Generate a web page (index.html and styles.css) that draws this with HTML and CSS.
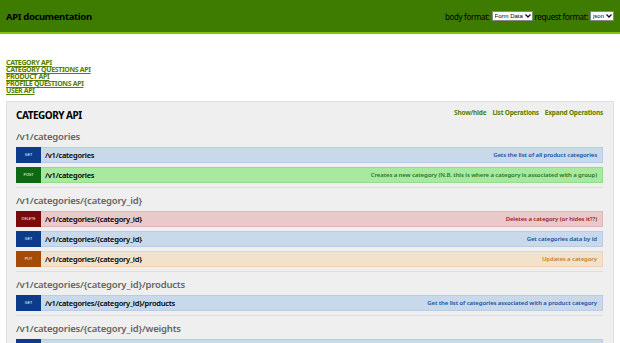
FILE: index.html
```html
<!DOCTYPE html>
<html lang="en">
  <head>
    <meta charset="UTF-8" />
    <meta name="viewport" content="width=device-width, initial-scale=1.0" />
    <title>API documentation</title>
    <link rel="stylesheet" href="styles.css">
  </head>
  <body>
    <header class="topbar">
      <h1 class="title">API documentation</h1>
      <form class="formats">
        <label>body format:</label>
        <span class="pick">
          <select><option>Form Data</option></select>
          <svg width="6" height="4" viewBox="0 0 6 4"><path d="M0.5 0.5 L3 3 L5.5 0.5" fill="none" stroke="#111" stroke-width="1.3"/></svg>
        </span>
        <label>request format:</label>
        <span class="pick">
          <select><option>json</option></select>
          <svg width="6" height="4" viewBox="0 0 6 4"><path d="M0.5 0.5 L3 3 L5.5 0.5" fill="none" stroke="#111" stroke-width="1.3"/></svg>
        </span>
      </form>
    </header>

    <ul class="api-links">
      <li><a href="#">CATEGORY API</a></li>
      <li><a href="#">CATEGORY QUESTIONS API</a></li>
      <li><a href="#">PRODUCT API</a></li>
      <li><a href="#">PROFILE QUESTIONS API</a></li>
      <li><a href="#">USER API</a></li>
    </ul>

    <div class="panel">
      <div class="panel-head">
        <h2>CATEGORY API</h2>
        <ul class="actions">
          <li><a href="#">Show/hide</a></li>
          <li><a href="#">List Operations</a></li>
          <li><a href="#">Expand Operations</a></li>
        </ul>
      </div>

      <section class="group">
        <h3>/v1/categories</h3>
        <ul class="ops">
          <li class="op get"><span class="verb">GET</span><span class="path">/v1/categories</span><span class="desc">Gets the list of all product categories</span></li>
          <li class="op post"><span class="verb">POST</span><span class="path">/v1/categories</span><span class="desc">Creates a new category (N.B. this is where a category is associated with a group)</span></li>
        </ul>
      </section>

      <section class="group">
        <h3>/v1/categories/{category_id}</h3>
        <ul class="ops">
          <li class="op delete"><span class="verb">DELETE</span><span class="path">/v1/categories/{category_id}</span><span class="desc">Deletes a category (or hides it??)</span></li>
          <li class="op get"><span class="verb">GET</span><span class="path">/v1/categories/{category_id}</span><span class="desc">Get categories data by id</span></li>
          <li class="op put"><span class="verb">PUT</span><span class="path">/v1/categories/{category_id}</span><span class="desc">Updates a category</span></li>
        </ul>
      </section>

      <section class="group">
        <h3>/v1/categories/{category_id}/products</h3>
        <ul class="ops">
          <li class="op get"><span class="verb">GET</span><span class="path">/v1/categories/{category_id}/products</span><span class="desc">Get the list of categories associated with a product category</span></li>
        </ul>
      </section>

      <section class="group">
        <h3>/v1/categories/{category_id}/weights</h3>
        <ul class="ops">
          <li class="op get"><span class="verb">GET</span><span class="path">/v1/categories/{category_id}/weights</span><span class="desc">Get the weights of a category</span></li>
        </ul>
      </section>
    </div>
  </body>
</html>
```

FILE: styles.css
```css
* {
  margin: 0;
  padding: 0;
  box-sizing: border-box;
}
body {
  font-family: "Noto Sans", "Open Sans", sans-serif;
  background-color: white;
  color: black;
  overflow: hidden;
}
ul {
  list-style: none;
}

.topbar {
  height: 34px;
  background-color: #3d7c00;
  border-bottom: 2px solid #89bf04;
  display: flex;
  justify-content: space-between;
  align-items: center;
  padding: 0 6px;
}
.title {
  font-size: 9.5px;
  font-weight: bold;
  letter-spacing: -0.35px;
}
.formats {
  display: flex;
  align-items: center;
  gap: 2px;
  font-size: 8px;
  letter-spacing: -0.35px;
}
.pick {
  display: inline-flex;
  align-items: center;
  gap: 1px;
  height: 10px;
  padding: 0 1px 0 2px;
  border: 1px solid #888;
  background-color: white;
  letter-spacing: 0;
}
.pick select {
  appearance: none;
  border: none;
  background: none;
  font-family: "Liberation Sans", sans-serif;
  font-size: 6px;
  line-height: 8px;
  color: black;
  padding: 0;
}

.api-links {
  margin: 25px 6px 7px;
  font-size: 7px;
  line-height: 7px;
  font-weight: bold;
  letter-spacing: -0.35px;
}
.api-links a {
  color: #547f00;
}

.panel {
  margin: 0 6px;
  background-color: #efefef;
  border: 1px solid #e0e0e0;
  padding: 6px 10px 0 9px;
  height: 260px;
}
.panel-head {
  display: flex;
  justify-content: space-between;
  align-items: flex-start;
}
.panel-head h2 {
  font-size: 10px;
  line-height: 15px;
  letter-spacing: -0.5px;
}
.actions {
  display: flex;
  gap: 6px;
  font-size: 6.5px;
  line-height: 10px;
  font-weight: bold;
  letter-spacing: -0.2px;
}
.actions a {
  color: #547f00;
  text-decoration: none;
}

.group {
  margin-top: 7px;
}
.group + .group {
  margin-top: 6px;
}
.group h3 {
  font-size: 9.5px;
  line-height: 14px;
  color: #666;
  font-weight: 600;
  letter-spacing: -0.2px;
  margin-bottom: 3px;
}
.ops {
  border-bottom: 1px solid #ddd;
}
.op {
  display: flex;
  align-items: center;
  height: 16px;
  margin-bottom: 4px;
  border: 1px solid;
}
.verb {
  width: 25px;
  height: 16px;
  margin: -1px 0 0 -1px;
  color: white;
  font-size: 4px;
  line-height: 16px;
  text-align: center;
  text-transform: uppercase;
}
.path {
  padding-left: 4px;
  font-size: 7.5px;
  font-weight: 600;
  letter-spacing: -0.25px;
}
.desc {
  margin-left: auto;
  padding-right: 5px;
  font-size: 6px;
  font-weight: 600;
  letter-spacing: -0.1px;
}

.get {
  background-color: #c8d9ec;
  border-color: #b8cde5;
}
.get .verb {
  background-color: #0c3b8a;
}
.get .desc {
  color: #1b4fa0;
}
.post {
  background-color: #a7ea9f;
  border-color: #93dc8a;
}
.post .verb {
  background-color: #0b6a12;
}
.post .desc {
  color: #1b7a1f;
}
.delete {
  background-color: #ebc8ca;
  border-color: #e2b6b9;
}
.delete .verb {
  background-color: #7a0a0a;
}
.delete .desc {
  color: #9b1b1f;
}
.put {
  background-color: #f2e1cb;
  border-color: #ecd3b4;
}
.put .verb {
  background-color: #a44b08;
}
.put .desc {
  color: #c4812f;
}
```
